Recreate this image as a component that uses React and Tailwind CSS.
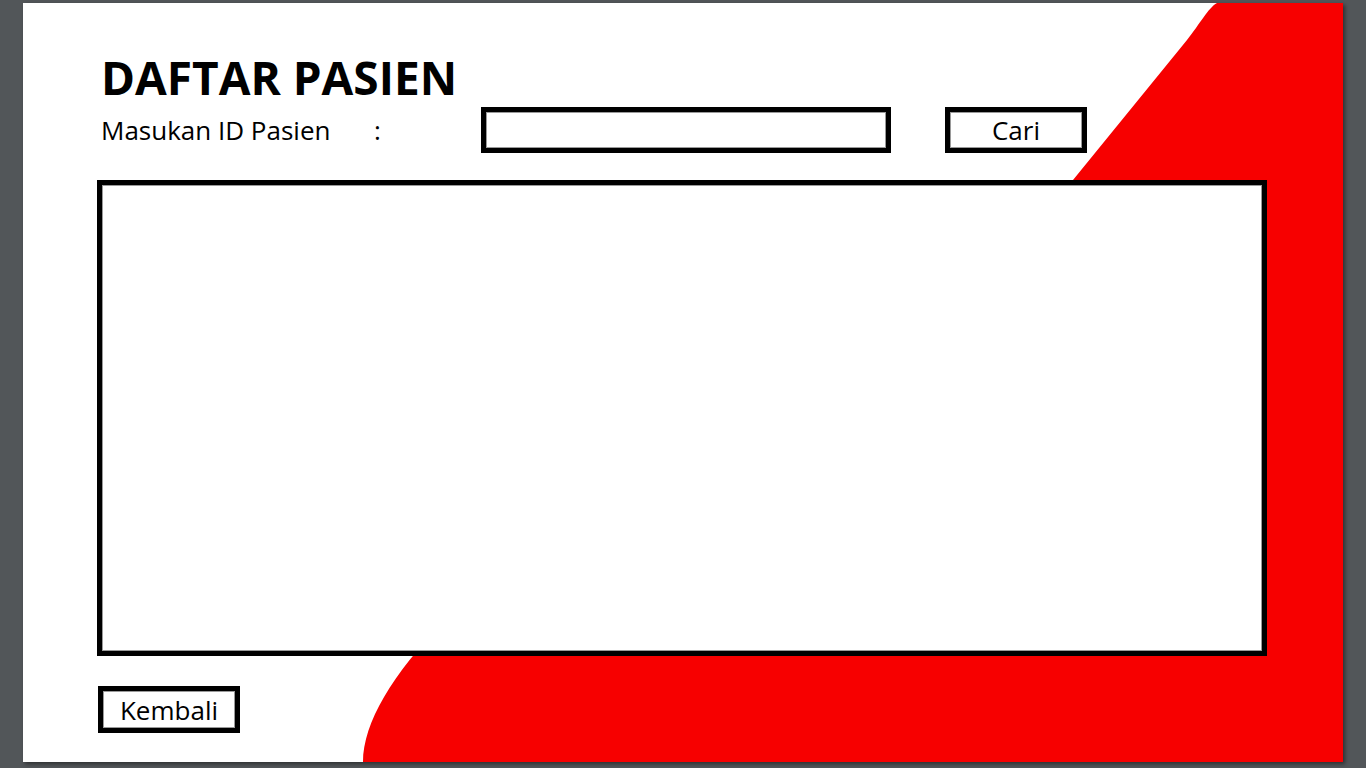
import { useState } from "react";

function RedWave() {
    return (
        <svg
            className="absolute inset-0 h-full w-full"
            viewBox="0 0 1320 759"
            preserveAspectRatio="none"
        >
            <path
                d="M1194 0 C1185 5 1177 21 1164 37 L1050 177 L420 620 C370 670 340 720 340 759 L1320 759 L1320 0 Z"
                fill="#f70000"
            />
        </svg>
    );
}

export default function App() {
    const [patientId, setPatientId] = useState("");

    return (
        <div
            className="h-[768px] w-[1366px] overflow-hidden bg-[#525659] pl-[23px] pt-[3px]"
            style={{ fontFamily: '"Open Sans", "Noto Sans", sans-serif' }}
        >
            <div className="relative h-[759px] w-[1320px] overflow-hidden bg-white shadow-[2px_2px_4px_rgba(0,0,0,0.45)]">
                <RedWave />
                <div className="relative flex flex-col pl-[74px] pt-[51px]">
                    <h1 className="ml-[4px] text-[46px] font-bold leading-none text-black">
                        DAFTAR PASIEN
                    </h1>
                    <div className="mt-[7px] flex h-[46px] items-center">
                        <span className="ml-[4px] w-[273px] text-[26px] leading-none text-black">
                            Masukan ID Pasien
                        </span>
                        <span className="w-[107px] text-[26px] leading-none text-black">:</span>
                        <input
                            value={patientId}
                            onChange={(e) => setPatientId(e.target.value)}
                            className="h-[46px] w-[410px] border-[5px] border-black bg-white px-2 text-[22px] outline-none shadow-[inset_0_0_0_1px_#9a9a9a]"
                        />
                        <button className="ml-[54px] h-[46px] w-[142px] border-[5px] border-black bg-white text-[26px] leading-none text-black shadow-[inset_0_0_0_1px_#9a9a9a]">
                            Cari
                        </button>
                    </div>
                    <div className="mt-[27px] h-[476px] w-[1170px] border-[5px] border-black bg-white shadow-[inset_0_0_0_1px_#9a9a9a]" />
                    <button className="ml-[1px] mt-[30px] h-[47px] w-[142px] border-[5px] border-black bg-white text-[26px] leading-none text-black shadow-[inset_0_0_0_1px_#9a9a9a]">
                        Kembali
                    </button>
                </div>
            </div>
        </div>
    );
}
